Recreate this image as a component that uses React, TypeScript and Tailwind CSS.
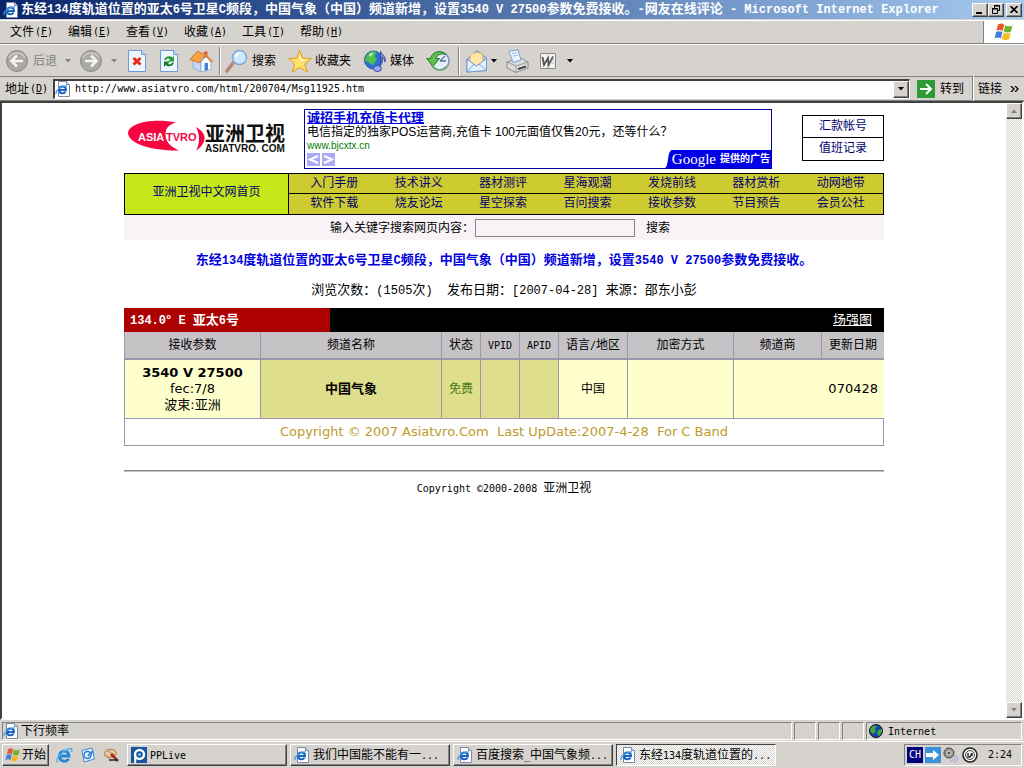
import React from 'react';

const pageTitle = '东经134度轨道位置的亚太6号卫星C频段，中国气象（中国）频道新增，设置3540 V 27500参数免费接收。';

const navRows = [
  ['入门手册', '技术讲义', '器材测评', '星海观潮', '发烧前线', '器材赏析', '动网地带'],
  ['软件下载', '烧友论坛', '星空探索', '百问搜索', '接收参数', '节目预告', '会员公社'],
];

const menus = [
  ['文件', 'F'],
  ['编辑', 'E'],
  ['查看', 'V'],
  ['收藏', 'A'],
  ['工具', 'T'],
  ['帮助', 'H'],
];

const columns = ['接收参数', '频道名称', '状态', 'VPID', 'APID', '语言/地区', '加密方式', '频道商', '更新日期'];

const raised = 'border border-t-white border-l-white border-r-[#404040] border-b-[#404040] shadow-[inset_-1px_-1px_0_#848284]';
const sunken = 'border border-t-[#848284] border-l-[#848284] border-r-white border-b-white';
const checker = 'bg-[repeating-conic-gradient(#ffffff_0_25%,#d6d3ce_0_50%)] bg-[length:2px_2px]';

// Half-width characters take half the advance of the Chinese ones
function Text({ children, large = false }: { children: string; large?: boolean }) {
  const parts = children.split(/([\x20-\x7e©]+)/).filter(Boolean);
  const latin = large
    ? 'font-["Liberation_Mono",monospace] text-[12px]'
    : 'font-["DejaVu_Sans_Mono",monospace] text-[10px]';
  return (
    <span className={`whitespace-pre ${large ? 'text-[13px]' : 'text-[12px]'}`}>
      {parts.map((part, i) => (
        <span key={i} className={/[\x20-\x7e©]/.test(part) ? latin : ''}>
          {part}
        </span>
      ))}
    </span>
  );
}

function Caret({ className = 'text-black' }: { className?: string }) {
  return (
    <svg className={`shrink-0 ${className}`} width="6" height="4" viewBox="0 0 6 4" fill="currentColor">
      <path d="M0 0h6L3 3.5z" />
    </svg>
  );
}

function IeIcon() {
  return (
    <svg className="shrink-0" width="16" height="16" viewBox="0 0 16 16">
      <path d="M3.500.5h8l3 3v12h-11z" fill="#fff" stroke="#7b8aa8" />
      <path d="M11.500.5v3h3" fill="#dbe4f3" stroke="#7b8aa8" />
      <path d="M4 9h7c0-4.600-6.600-4.800-7-.2-.2 4 5 4.600 6.600 1.800" fill="none" stroke="#1c62c4" strokeWidth="2" />
      <path d="M1.200 13C-.2 10 6 4.500 12 4.800" fill="none" stroke="#3f9be6" strokeWidth="1.200" />
    </svg>
  );
}

function IeBlue() {
  return (
    <svg width="17" height="17" viewBox="0 0 17 17">
      <path d="M4 9h9c0-6.500-9.500-6.500-9.500 0 0 6 7 6.500 9 2.800" fill="none" stroke="#2187d8" strokeWidth="2.800" />
      <path d="M1.500 15.500C-1 11 9 1.500 15 1.800c1.500.2 1 2 .4 3" fill="none" stroke="#4cb1f0" strokeWidth="1.400" />
    </svg>
  );
}

function WindowsFlag({ size }: { size: number }) {
  return (
    <svg className="shrink-0" width={size} height={size} viewBox="0 0 20 20">
      <path d="M4 2.500C6.500 1 8.500 1.500 10.200 2.700L8.700 9C6.800 7.800 4.800 7.700 2.400 8.800z" fill="#e8562a" />
      <path d="M11.200 3.200c2.400 1.500 4.600 1.300 7.300.2l-1.600 6.300c-2.500 1.200-4.800 1-7.200-.3z" fill="#6fb52c" />
      <path d="M2.100 9.900c2.400-1.100 4.400-1 6.300.2L6.900 16.400C5.200 15.200 3.200 15 .6 16.200z" fill="#3f7fe0" />
      <path d="M9.400 10.500c2.400 1.300 4.700 1.500 7.200.3L15 17.200c-2.500 1.200-4.900 1-7.100-.4z" fill="#f8b91c" />
    </svg>
  );
}

function ArrowCircle({ back = false }: { back?: boolean }) {
  return (
    <svg className="shrink-0" width="24" height="24" viewBox="0 0 24 24">
      <circle cx="12" cy="12" r="10.500" fill="#aaa8a5" stroke="#8a8885" />
      <path d="M4 9a9 9 0 0 1 16 0" fill="none" stroke="#c6c4c1" strokeWidth="2" />
      <path
        d={back ? 'M18 12H7M12 6.500L6.500 12l5.500 5.500' : 'M6 12h11M12 6.500l5.500 5.500-5.500 5.500'}
        fill="none"
        stroke="#f4f3f1"
        strokeWidth="2.600"
      />
    </svg>
  );
}

function Sheet({ children }: { children: React.ReactNode }) {
  return (
    <svg width="24" height="24" viewBox="0 0 24 24">
      <path d="M3.500 1.500h13l4 4v17h-17z" fill="#eef5ff" stroke="#6e9ad6" />
      <path d="M16.500 1.500v4h4" fill="#c5dbf7" stroke="#6e9ad6" />
      {children}
    </svg>
  );
}

function HomeIcon() {
  return (
    <svg width="24" height="24" viewBox="0 0 24 24">
      <path d="M15 2.500h3.500V9H15z" fill="#d85a35" />
      <path d="M4 11l8 2v10l-8-4z" fill="#c6daf5" stroke="#7c9dcc" strokeWidth=".7" />
      <path d="M12 13l5-5.500 5 5.500v7.500L12 23z" fill="#f7fbff" stroke="#7c9dcc" strokeWidth=".7" />
      <path d="M15.500 14h3.500v7l-3.500.7z" fill="#4d7fd0" />
      <path d="M1 10.500L8.500 2l8 4L10 14z" fill="#f3a445" stroke="#c46c23" strokeWidth=".8" />
      <path d="M16 5.500l7.500 7.500" stroke="#e0803a" strokeWidth="1.800" />
    </svg>
  );
}

function SearchIcon() {
  return (
    <svg className="shrink-0" width="24" height="24" viewBox="0 0 24 24">
      <path d="M3 22l6-8" stroke="#b38874" strokeWidth="3.600" strokeLinecap="round" />
      <circle cx="15.500" cy="8.500" r="7" fill="#cde7fc" stroke="#7ca9df" strokeWidth="1.600" />
      <path d="M11 7c1-3 4-4 6.500-3-2 .5-4.500 2-5 5z" fill="#fff" />
    </svg>
  );
}

function StarIcon() {
  return (
    <svg className="shrink-0" width="24" height="24" viewBox="0 0 24 24">
      <path
        d="M11.500 1l3 8 9 .5-7 5.500 3 8-8.200-4.500L4.500 23l2-8L.8 9.500 9 9z"
        fill="#ffe16a"
        stroke="#dd9a1e"
        strokeLinejoin="round"
      />
      <path d="M11.500 4l2 6.200 6 .6-7.500 2z" fill="#fff6c2" />
    </svg>
  );
}

function MediaIcon() {
  return (
    <svg className="shrink-0" width="24" height="24" viewBox="0 0 24 24">
      <circle cx="9.500" cy="11" r="9" fill="#2d6fd8" stroke="#1b459e" strokeWidth=".8" />
      <path d="M3 6c3-4.500 8-4 9-3l-1 5 2 2-4 6-5-3-3-1C1 9 2 7.500 3 6z" fill="#4cc04a" />
      <path d="M4.500 6C6 4 8 3.500 9.500 3.700L7 8z" fill="#b7f0b0" />
      <path d="M16.500 19V2c1 4 6 5 4.500 11 0-3-2-4.500-3.500-5" fill="#8190dd" stroke="#3c4a9b" />
      <ellipse cx="13.500" cy="19.500" rx="4" ry="3" fill="#9aa7ec" stroke="#3c4a9b" />
    </svg>
  );
}

function HistoryIcon() {
  return (
    <svg width="24" height="24" viewBox="0 0 24 24">
      <circle cx="14" cy="12" r="9" fill="#e4eefa" stroke="#7f96b8" strokeWidth="1.600" />
      <path d="M14 12l5-5M14 12h6" stroke="#587099" strokeWidth="1.300" />
      <path
        d="M20 5.500C14 0 6 3 4.500 9.500H.8l6.200 8 6.500-8H9.800C11 6 15 4 20 5.500z"
        fill="#5fc04e"
        stroke="#23802a"
      />
      <path d="M6 16c2 5 9 7 14 2" fill="none" stroke="#5aa95a" strokeWidth="1.400" />
    </svg>
  );
}

function MailIcon() {
  return (
    <svg className="shrink-0" width="24" height="24" viewBox="0 0 24 24">
      <path d="M2 10L12 1.500 21.500 9v12.500L2 23z" fill="#a9caf3" stroke="#6c94cf" />
      <path d="M5 7c3-4 10-5 13-.5V13l-7 4-6-4z" fill="#ffe5a8" stroke="#e2a64c" strokeWidth=".8" />
      <path d="M2 10.500l9.500 6.500L21.500 9.500v12L2 23z" fill="#e3f0ff" stroke="#6c94cf" strokeWidth=".9" />
      <path d="M2 23l7-8M21.500 21.500L14 15" stroke="#6c94cf" strokeWidth=".9" />
    </svg>
  );
}

function PrinterIcon() {
  return (
    <svg width="24" height="24" viewBox="0 0 24 24">
      <path d="M2 13l14-4 7 4v6l-12 4.500L2 19z" fill="#dcdcdc" stroke="#777" strokeWidth=".8" />
      <path d="M2 13l9 4 12-4M11 17v6" fill="none" stroke="#888" strokeWidth=".8" />
      <path d="M4 2l9-1 3 10-8 2.500z" fill="#eaf3ff" stroke="#7ba3db" />
      <path d="M7 4.500l5-.7M8 7l5-.7" stroke="#9dbbe4" />
      <path d="M13 19l8-2.500v2L13 21z" fill="#3d3d3d" />
    </svg>
  );
}

function WordIcon() {
  return (
    <svg width="18" height="18" viewBox="0 0 18 18">
      <path d="M1.500 1.500h15v15h-15z" fill="#f3f3f3" stroke="#8a8a8a" />
      <path d="M3.500 5l1.500 8 4-7 .5 7L14 4.500" fill="none" stroke="#555" strokeWidth="1.800" />
      <path d="M12.500 8h3M12 11h3.500" stroke="#bbb" />
    </svg>
  );
}

function GlobeIcon() {
  return (
    <svg width="14" height="14" viewBox="0 0 14 14">
      <circle cx="7" cy="7" r="6.500" fill="#1a3fae" stroke="#111" />
      <path d="M2 4c2-3 5-3 6-2L6 5l1 2-3 3-3-3zM9 6l4-1v3l-3 4-2-2z" fill="#3cab3c" />
    </svg>
  );
}

function SiteLogo() {
  return (
    <svg className="shrink-0" width="162" height="36" viewBox="0 0 162 36" role="img" aria-label="ASIATVRO.COM 亚洲卫视">
      <path d="M49 2.500C28-2 2 2 1 13c1 11.500 26 18 51 17.500C44 27 38.500 22 38.500 14.500 38.500 8 42 4.500 49 2.500z" fill="#f5053f" />
      <path d="M69 7c11 6 12 15 0 24 4-8 4-16 0-24z" fill="#f5053f" />
      <text x="11" y="21" fontFamily="Liberation Sans" fontWeight="bold" fontSize="11" fill="#fff">ASIA</text>
      <text x="39" y="21" fontFamily="Liberation Sans" fontWeight="bold" fontSize="11" fill="#f5053f">TVRO</text>
      <text x="78" y="21" fontFamily="Noto Sans CJK SC" fontWeight="bold" fontSize="20" fill="#111">亚洲卫视</text>
      <text x="78" y="32" fontFamily="Liberation Sans" fontWeight="bold" fontSize="10" fill="#111">ASIATVRO. COM</text>
    </svg>
  );
}

function Separator() {
  return <div className="h-7 w-[2px] shrink-0 border-l border-l-[#848284] bg-white" />;
}

function TitleBar() {
  return (
    <div className="flex h-[19px] shrink-0 items-center bg-linear-to-r from-[#0a246a] to-[#a6caf0] pl-[3px] text-white">
      <IeIcon />
      <h1 className="ml-[2px] flex-1 overflow-hidden font-bold leading-[18px] whitespace-nowrap">
        <Text large>{`${pageTitle}-网友在线评论 - Microsoft Internet Explorer`}</Text>
      </h1>
      <div className="flex pr-[2px]">
        <button aria-label="最小化" className={`h-[14px] w-4 bg-[#d6d3ce] ${raised}`}>
          <span className="mt-[6px] ml-[3px] block h-[2px] w-[6px] bg-black" />
        </button>
        <button aria-label="还原" className={`flex h-[14px] w-4 items-center justify-center bg-[#d6d3ce] ${raised}`}>
          <svg width="9" height="9" viewBox="0 0 9 9" fill="none" stroke="#000">
            <path d="M2.500 3V.5h5v5H6M2 1h6M.5 3.500h5v5h-5zM0 4h6" />
          </svg>
        </button>
        <button aria-label="关闭" className={`ml-[2px] flex h-[14px] w-4 items-center justify-center bg-[#d6d3ce] ${raised}`}>
          <svg width="8" height="7" viewBox="0 0 8 7" stroke="#000" strokeWidth="1.600">
            <path d="M.5 0l7 7M7.500 0l-7 7" />
          </svg>
        </button>
      </div>
    </div>
  );
}

function MenuBar() {
  return (
    <div className="mt-px flex h-6 shrink-0 border-t border-b border-t-white border-b-[#848284]">
      <nav className="flex flex-1 items-center border-r border-[#848284] pl-[10px]">
        {menus.map(([label, key]) => (
          <button key={key} className="flex w-[58px] items-center gap-px text-[12px] leading-4">
            {label}
            <span className="font-['DejaVu_Sans_Mono',monospace] text-[10px]">
              (<u>{key}</u>)
            </span>
          </button>
        ))}
      </nav>
      <div className="flex w-10 items-center justify-center bg-white">
        <WindowsFlag size={20} />
      </div>
    </div>
  );
}

function ToolBar() {
  return (
    <div className="flex h-8 shrink-0 items-center border-t border-white pl-[5px] text-[12px]">
      <button className="flex w-[74px] items-center text-[#848284]">
        <ArrowCircle back />
        <span className="mr-2 ml-1">后退</span>
        <Caret className="text-[#848284]" />
      </button>
      <button aria-label="前进" className="flex w-[46px] items-center gap-2">
        <ArrowCircle />
        <Caret className="text-[#848284]" />
      </button>
      <button aria-label="停止" className="w-8">
        <Sheet>
          <path d="M8.500 9l7 6.500M15.500 9l-7 6.500" stroke="#e52d12" strokeWidth="3" />
        </Sheet>
      </button>
      <button aria-label="刷新" className="w-8">
        <Sheet>
          <path d="M7 11c1-4 6-5 8.500-2.500L17 6.500v6h-6l2-2c-1.500-1.500-3.500-1-4 .5z" fill="#23a136" />
          <path d="M17 13.500c-1 4-6 5-8.500 2.500L7 18v-5.500h6l-2 2c1.500 1.500 3.500 1 4-1z" fill="#12812a" />
        </Sheet>
      </button>
      <button aria-label="主页" className="w-[30px]">
        <HomeIcon />
      </button>
      <Separator />
      <button className="ml-[3px] flex w-16 items-center gap-1">
        <SearchIcon />
        搜索
      </button>
      <button className="flex w-[76px] items-center gap-[3px]">
        <StarIcon />
        收藏夹
      </button>
      <button className="flex w-[62px] items-center gap-[2px]">
        <MediaIcon />
        媒体
      </button>
      <button aria-label="历史" className="w-8">
        <HistoryIcon />
      </button>
      <Separator />
      <button aria-label="邮件" className="ml-[5px] flex w-10 items-center gap-[2px]">
        <MailIcon />
        <Caret />
      </button>
      <button aria-label="打印" className="w-[34px]">
        <PrinterIcon />
      </button>
      <button aria-label="编辑" className="flex items-center gap-[10px]">
        <WordIcon />
        <Caret />
      </button>
    </div>
  );
}

function AddressBar() {
  return (
    <div className="flex h-[25px] shrink-0 items-center border-t border-b border-t-[#848284] border-b-[#848284] pl-[5px] text-[12px]">
      <label htmlFor="address" className="flex w-12 items-center gap-px">
        地址
        <span className="font-['DejaVu_Sans_Mono',monospace] text-[10px]">
          (<u>D</u>)
        </span>
      </label>
      <div className="flex h-5 flex-1 items-center border border-t-2 border-l-2 border-white border-t-[#404040] border-l-[#404040] bg-white">
        <IeIcon />
        <input
          id="address"
          className="ml-1 min-w-0 flex-1 font-['DejaVu_Sans_Mono',monospace] text-[10px] leading-4 outline-none"
          defaultValue="http://www.asiatvro.com/html/200704/Msg11925.htm"
        />
        <button aria-label="地址列表" className={`flex h-full w-4 items-center justify-center bg-[#d6d3ce] ${raised}`}>
          <Caret />
        </button>
      </div>
      <button className="ml-[7px] flex w-[55px] items-center gap-[5px]">
        <svg className="shrink-0" width="18" height="18" viewBox="0 0 18 18">
          <path d="M0 0h18v18H0z" fill="#2c9a35" />
          <path d="M3 9h11M9 4l5 5-5 5" fill="none" stroke="#fff" strokeWidth="2" />
        </svg>
        转到
      </button>
      <Separator />
      <button className="flex w-[50px] items-center gap-2 pl-1">
        链接
        <svg width="9" height="6" viewBox="0 0 9 6" fill="none" stroke="#000" strokeWidth="1.300">
          <path d="M1 0l3 3-3 3M5 0l3 3-3 3" />
        </svg>
      </button>
    </div>
  );
}

function AdBox() {
  return (
    <div className="ml-[15px] flex h-[60px] w-[468px] flex-col border border-[#00009c] bg-white leading-[14px]">
      <a href="#ad" className="mt-px ml-[2px] text-[13px] font-bold text-[#0000de] underline">
        诚招手机充值卡代理
      </a>
      <p className="ml-[2px] font-['Liberation_Sans','Noto_Sans_CJK_SC',sans-serif] text-[12px] whitespace-pre">
        电信指定的独家POS运营商,充值卡 100元面值仅售20元，还等什么？
      </p>
      <div className="flex flex-1">
        <div className="ml-[2px] flex-1">
          <p className="font-['Liberation_Sans',sans-serif] text-[10px] leading-[14px] text-[#008000]">www.bjcxtx.cn</p>
          <div className="flex gap-[2px]">
            <button aria-label="上一条" className="flex h-[13px] w-[13px] items-center justify-center bg-[#aaaaf4]">
              <svg width="11" height="9" viewBox="0 0 11 9" fill="none" stroke="#fff" strokeWidth="2">
                <path d="M10 1L2 4.500 10 8" />
              </svg>
            </button>
            <button aria-label="下一条" className="flex h-[13px] w-[13px] items-center justify-center bg-[#aaaaf4]">
              <svg width="11" height="9" viewBox="0 0 11 9" fill="none" stroke="#fff" strokeWidth="2">
                <path d="M1 1l8 3.500L1 8" />
              </svg>
            </button>
          </div>
        </div>
        <a href="#google" className="flex h-[18px] items-center self-end text-white">
          <svg width="7" height="18" viewBox="0 0 7 18">
            <path d="M0 18C4 16 2 1 7 0v18z" fill="#0000e6" />
          </svg>
          <span className="flex h-full items-center gap-1 bg-[#0000e6] pr-px">
            <span className="font-['Liberation_Serif',serif] text-[15px] leading-[18px]">Google</span>
            <span className="text-[10px] font-bold">提供的广告</span>
          </span>
        </a>
      </div>
    </div>
  );
}

function SiteHeader() {
  return (
    <header className="flex items-start pt-[6px]">
      <div className="mt-[11px] ml-[3px]">
        <SiteLogo />
      </div>
      <AdBox />
      <div className="mt-[6px] ml-auto w-[82px] border border-black text-center text-[12px] leading-[21px] text-[#00006c]">
        <a href="#account" className="block h-[22px] border-b border-black">
          汇款帐号
        </a>
        <a href="#log" className="block h-[22px]">
          值班记录
        </a>
      </div>
    </header>
  );
}

function SiteNav() {
  return (
    <nav className="mt-1 flex border border-black text-[12px] text-[#00006c]">
      <a href="#home" className="flex w-[164px] items-center justify-center border-r border-black bg-[#c6e718] pb-1">
        亚洲卫视中文网首页
      </a>
      <div className="flex-1 bg-[#cecb31]">
        {navRows.map((row, i) => (
          <div key={i} className={`grid h-5 grid-cols-7 pl-[3px] text-center leading-[18px] ${i === 0 ? 'border-b border-black' : ''}`}>
            {row.map((item) => (
              <a key={item} href="#nav">
                {item}
              </a>
            ))}
          </div>
        ))}
      </div>
    </nav>
  );
}

function ChannelTable() {
  const head = 'border-r border-b-2 border-[#9c96ad] font-normal last:border-r-0';
  const cell = 'border-r border-[#9c96ad]';
  return (
    <section className="mt-[7px]">
      <div className="flex h-6 items-center justify-between bg-black pr-3 text-white">
        <h3 className="flex h-full w-[206px] items-center bg-[#ad0000] pl-[6px] font-bold">
          <Text large>134.0° E 亚太6号</Text>
        </h3>
        <a href="#map" className="text-[13px] leading-4 underline">
          场强图
        </a>
      </div>
      <table className="w-full table-fixed border-separate border-spacing-0 border-l border-[#9c96ad] text-center text-[12px] leading-4">
        <colgroup>
          <col className="w-[136px]" />
          <col className="w-[181px]" />
          <col className="w-[39px]" />
          <col className="w-[39px]" />
          <col className="w-[39px]" />
          <col className="w-[69px]" />
          <col className="w-[106px]" />
          <col />
          <col className="w-[62px]" />
        </colgroup>
        <thead>
          <tr className="h-7 bg-[#c6c3c6]">
            {columns.map((name) => (
              <th key={name} className={head}>
                <Text>{name}</Text>
              </th>
            ))}
          </tr>
        </thead>
        <tbody>
          <tr className="h-[58px] bg-[#ffffce] font-['DejaVu_Sans','Noto_Sans_CJK_SC',sans-serif] text-[13px]">
            <td className={cell}>
              <b>3540 V 27500</b>
              <br />
              fec:7/8
              <br />
              波束:亚洲
            </td>
            <td className={`bg-[#dede8c] font-bold ${cell}`}>中国气象</td>
            <td className={`bg-[#dede8c] text-[12px] text-[#4a7a10] ${cell}`}>免费</td>
            <td className={`bg-[#dede8c] ${cell}`} />
            <td className={`bg-[#dede8c] ${cell}`} />
            <td className={`text-[12px] ${cell}`}>中国</td>
            <td className={cell} />
            <td colSpan={2} className="pr-[6px] text-right">
              070428
            </td>
          </tr>
          <tr className="h-7">
            <td
              colSpan={9}
              className="border-t border-r border-b border-[#9c96ad] bg-white font-['DejaVu_Sans',sans-serif] text-[13px] whitespace-pre text-[#bd9a29]"
            >
              {'Copyright © 2007 Asiatvro.Com  Last UpDate:2007-4-28  For C Band'}
            </td>
          </tr>
        </tbody>
      </table>
    </section>
  );
}

function WebPage() {
  return (
    <div className="flex min-h-0 flex-1 border-2 border-t-[#404040] border-r-white border-b-white border-l-[#404040] bg-white">
      <main className="flex-1 overflow-hidden">
        <div className="mx-auto w-[760px]">
          <SiteHeader />
          <SiteNav />
          <form className="flex h-[25px] items-center bg-[#f7f3f7] pl-[206px] text-[12px]">
            <label htmlFor="keyword">输入关键字搜索网页内容：</label>
            <input id="keyword" className="mx-px h-[18px] w-[160px] border border-[#848284]" />
            <button type="button" className="ml-[10px]">
              搜索
            </button>
          </form>
          <h2 className="mt-[10px] text-center font-bold leading-5 text-[#0000de]">
            <Text large>{pageTitle}</Text>
          </h2>
          <p className="mt-[9px] text-center leading-5">
            <Text large>{'浏览次数：(1505次)  发布日期：[2007-04-28] 来源：邵东小彭'}</Text>
          </p>
          <ChannelTable />
          <hr className="mt-6 border-t border-b border-t-[#848284] border-b-[#c6c3c6]" />
          <footer className="mt-[6px] text-center leading-5">
            <Text>Copyright ©2000-2008 亚洲卫视</Text>
          </footer>
        </div>
      </main>
      <div className={`flex w-4 flex-col justify-between ${checker}`}>
        <button aria-label="向上滚动" className={`flex h-4 items-center justify-center bg-[#d6d3ce] ${raised}`}>
          <Caret className="rotate-180 text-[#848284]" />
        </button>
        <button aria-label="向下滚动" className={`flex h-4 items-center justify-center bg-[#d6d3ce] ${raised}`}>
          <Caret className="text-[#848284]" />
        </button>
      </div>
    </div>
  );
}

function StatusBar() {
  return (
    <div className="mt-[2px] flex h-[18px] shrink-0 gap-[2px] px-[2px]">
      <div className={`flex flex-1 items-center gap-[2px] ${sunken}`}>
        <IeIcon />
        <Text>下行频率</Text>
      </div>
      <div className={`w-[22px] ${sunken}`} />
      <div className={`w-[22px] ${sunken}`} />
      <div className={`w-[22px] ${sunken}`} />
      <div className={`flex w-[156px] items-center gap-[5px] pl-[2px] ${sunken}`}>
        <GlobeIcon />
        <Text>Internet</Text>
      </div>
    </div>
  );
}

function TaskButton({ label, active = false, icon = <IeIcon /> }: { label: string; active?: boolean; icon?: React.ReactNode }) {
  return (
    <button
      className={`flex h-[22px] w-[160px] items-center gap-[3px] pl-[3px] ${
        active
          ? `border border-t-[#404040] border-l-[#404040] border-r-white border-b-white ${checker}`
          : `bg-[#d6d3ce] ${raised}`
      }`}
    >
      {icon}
      <Text>{label}</Text>
    </button>
  );
}

function TaskBar() {
  return (
    <div className="mt-px flex h-[27px] shrink-0 items-center border-t border-white px-[2px]">
      <button className={`flex h-[22px] w-[47px] items-center gap-px pl-[2px] text-[12px] ${raised}`}>
        <WindowsFlag size={16} />
        开始
      </button>
      <div className="flex w-[78px] items-center gap-[7px] pl-[7px]">
        <IeBlue />
        <svg width="16" height="16" viewBox="0 0 16 16">
          <path d="M2 3.500L12 1l2.500 11L4 15z" fill="#e9f3ff" stroke="#3f86d8" />
          <circle cx="7.500" cy="8" r="3.500" fill="none" stroke="#2b78d0" strokeWidth="1.500" />
          <path d="M7 8.500l5-5 2 1.500-5 4.500z" fill="#3a8be2" />
        </svg>
        <svg width="17" height="16" viewBox="0 0 17 16">
          <path d="M2 5c2-3 9-4 11 0s-5 6-8 5-4-3-3-5z" fill="#e8c79a" stroke="#a9744a" />
          <path d="M3 3l9 5M1 8l6 4" stroke="#b98d5d" />
          <path d="M8 7l7 7" stroke="#a32c1c" strokeWidth="2.500" />
          <path d="M6 13h9" stroke="#222" strokeWidth="1.500" />
        </svg>
      </div>
      <div className="flex gap-[3px]">
        <TaskButton
          label="PPLive"
          icon={
            <svg className="shrink-0" width="16" height="16" viewBox="0 0 16 16">
              <path d="M0 0h16v16H0z" fill="#14559c" />
              <circle cx="8.500" cy="7.500" r="4.500" fill="#14559c" stroke="#fff" strokeWidth="2.400" />
              <path d="M4.200 7v9" stroke="#fff" strokeWidth="2" />
              <circle cx="8.500" cy="7.500" r="1.500" fill="#7cc4f4" />
            </svg>
          }
        />
        <TaskButton label="我们中国能不能有一..." />
        <TaskButton label="百度搜索_中国气象频..." />
        <TaskButton label="东经134度轨道位置的..." active />
      </div>
      <div className={`ml-auto flex h-[22px] w-[118px] items-center gap-[2px] pl-[2px] ${sunken}`}>
        <span className="flex h-4 w-4 items-center justify-center bg-[#00007b] font-['DejaVu_Sans_Mono',monospace] text-[10px] text-white">
          CH
        </span>
        <svg width="16" height="16" viewBox="0 0 16 16">
          <path d="M0 0h16v16H0z" fill="#3a92d8" />
          <path d="M1 6h7V3l6 5-6 5v-3H1z" fill="#fff" />
        </svg>
        <svg width="16" height="16" viewBox="0 0 16 16">
          <circle cx="6" cy="6" r="5" fill="#999" stroke="#444" />
          <circle cx="6" cy="6" r="2" fill="#555" stroke="#ddd" />
          <path d="M8 14c3-1 5-3 5-6M11 15.500c2-1 4-3 4-5" fill="none" stroke="#8f94e8" />
        </svg>
        <svg className="ml-px" width="16" height="16" viewBox="0 0 16 16">
          <circle cx="8" cy="8" r="7" fill="#fff" stroke="#222" strokeWidth="1.600" />
          <circle cx="8" cy="8" r="4.500" fill="#eee" stroke="#444" />
          <path d="M6 6v4h2l2-4v3" fill="none" stroke="#222" strokeWidth="1.300" />
        </svg>
        <time className="ml-2 font-['DejaVu_Sans_Mono',monospace] text-[10px]">2:24</time>
      </div>
    </div>
  );
}

export default function App() {
  return (
    <div className="flex h-screen flex-col overflow-hidden bg-[#d6d3ce] font-['Liberation_Sans','Noto_Sans_CJK_SC',sans-serif] text-[12px] leading-4 text-black">
      <TitleBar />
      <MenuBar />
      <ToolBar />
      <AddressBar />
      <WebPage />
      <StatusBar />
      <TaskBar />
    </div>
  );
}
